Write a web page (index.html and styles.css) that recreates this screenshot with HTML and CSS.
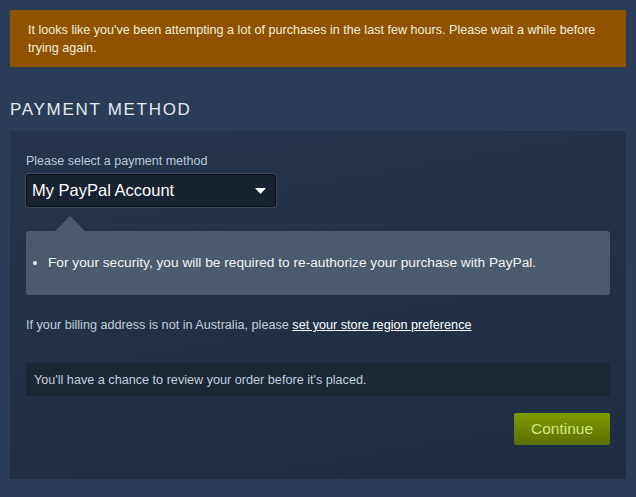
FILE: index.html
```html
<!DOCTYPE html>
<html>
<head>
<meta charset="utf-8">
<link rel="stylesheet" href="styles.css">
</head>
<body>
<div class="page">
  <div class="alert">It looks like you've been attempting a lot of purchases in the last few hours. Please wait a while before trying again.</div>
  <h2 class="heading">Payment Method</h2>
  <div class="panel">
    <div class="label">Please select a payment method</div>
    <div class="select">
      <span class="select-text">My PayPal Account</span>
      <svg class="caret" width="11" height="6" viewBox="0 0 11 6"><path d="M0 0H11L5.5 6Z" fill="#fff"/></svg>
    </div>
    <div class="info">
      <span class="pointer"></span>
      <ul class="info-list">
        <li>For your security, you will be required to re-authorize your purchase with PayPal.</li>
      </ul>
    </div>
    <div class="billing">If your billing address is not in Australia, please <a class="link" href="#">set your store region preference</a></div>
    <div class="review">You'll have a chance to review your order before it's placed.</div>
    <div class="actions">
      <button class="btn">Continue</button>
    </div>
  </div>
</div>
</body>
</html>
```

FILE: styles.css
```css
html, body {
  margin: 0;
  padding: 0;
}
body {
  background: #293d58;
  font-family: "Liberation Sans", Arial, sans-serif;
  width: 636px;
  height: 497px;
  overflow: hidden;
}
.page {
  padding: 10px 10px 0;
}
.alert {
  background: #8f5300;
  color: #f2ecdf;
  font-size: 12.6px;
  line-height: 18px;
  padding: 11px 18px 10px;
}
.heading {
  margin: 33px 0 0;
  font-size: 17px;
  font-weight: normal;
  letter-spacing: 1.7px;
  text-transform: uppercase;
  color: #e6eaee;
  line-height: 20px;
  height: 20px;
}
.panel {
  margin-top: 11px;
  background: linear-gradient(170deg, #23344c 0%, #1f2d42 100%);
  height: 348px;
  box-sizing: border-box;
  padding: 22px 16px 0;
}
.label {
  color: #b8cbdc;
  font-size: 12.5px;
  line-height: 16px;
}
.select {
  margin-top: 5px;
  width: 250px;
  height: 33px;
  box-sizing: border-box;
  background: #182230;
  border: 1px solid #0b0f16;
  border-radius: 3px;
  box-shadow: 0 0 0 1px rgba(120,140,160,0.25);
  display: flex;
  align-items: center;
  justify-content: space-between;
  padding: 0 9px 0 5px;
}
.select-text {
  color: #ffffff;
  font-size: 16.5px;
}
.caret {
  display: block;
}
.info {
  position: relative;
  margin-top: 24px;
  background: #4b5b6f;
  border-radius: 3px;
  height: 64px;
  display: flex;
  align-items: center;
}
.pointer {
  position: absolute;
  left: 29px;
  top: -15px;
  width: 0;
  height: 0;
  border-left: 15px solid transparent;
  border-right: 15px solid transparent;
  border-bottom: 15px solid #4b5b6f;
}
.info-list {
  margin: 0;
  padding: 0 0 0 22px;
  color: #f2f4f6;
  font-size: 13.7px;
  line-height: 18px;
}
.billing {
  margin-top: 22px;
  color: #c2d0dc;
  font-size: 12.65px;
  line-height: 16px;
}
.link {
  color: #ffffff;
  text-decoration: underline;
}
.review {
  margin-top: 30px;
  background: #1b2637;
  height: 33px;
  box-sizing: border-box;
  padding: 0 8px;
  display: flex;
  align-items: center;
  color: #c2d0dc;
  font-size: 12.65px;
}
.actions {
  margin-top: 17px;
  display: flex;
  justify-content: flex-end;
}
.btn {
  width: 96px;
  height: 32px;
  border: none;
  border-radius: 2px;
  background: linear-gradient(to bottom, #809b00 0%, #5c6e00 100%);
  color: #d2e885;
  font-family: "Liberation Sans", Arial, sans-serif;
  font-size: 15.5px;
  padding: 0;
}
```
